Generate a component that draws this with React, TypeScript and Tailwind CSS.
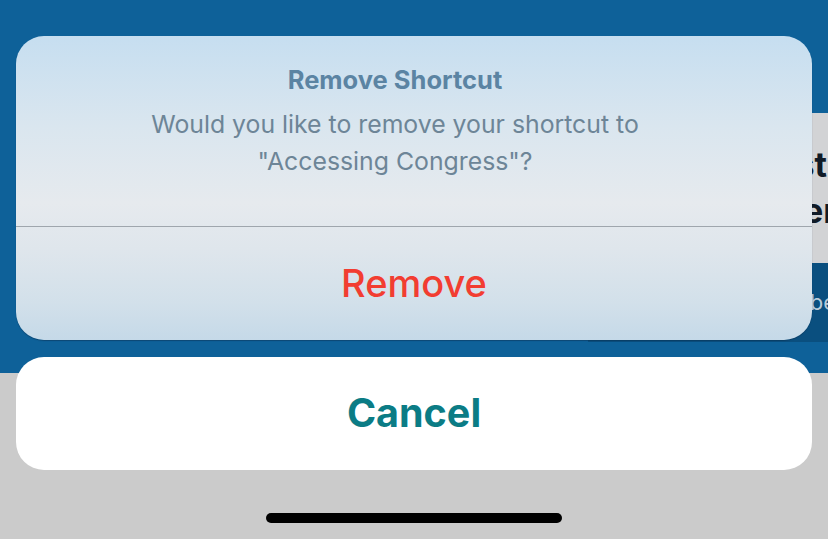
export default function App() {
  return (
    <div className="relative h-[539px] w-[828px] overflow-hidden font-['Inter',sans-serif]">
      {/* page underneath the sheet */}
      <div className="flex h-full flex-col">
        <div className="h-[373px] bg-[#0e6199] pt-[113px]">
          <div className="ml-auto w-[240px] overflow-hidden">
            <div className="flex h-[150px] flex-col justify-center gap-[8px] bg-[#d2d3d5] text-[34px] font-bold leading-[38px] text-[#101a26]">
              <div className="mr-[1px] whitespace-nowrap text-right">Latest</div>
              <div className="mr-[-9px] whitespace-nowrap text-right">Member</div>
            </div>
            <div className="flex h-[79px] items-center justify-end bg-[#0a4f7f] text-[22px] text-[#b9cbd9]">
              <span className="mr-[-8px] whitespace-nowrap">Subscribe</span>
            </div>
          </div>
        </div>
        <div className="flex-1 bg-[#cbcbcb]" />
      </div>

      {/* action sheet */}
      <div className="absolute inset-0 flex flex-col gap-[17px] px-4 pt-9">
        <div className="overflow-hidden rounded-[28px] bg-[linear-gradient(180deg,#c6def0_0%,#dae6ef_30%,#e6eaee_55%,#dfe6ec_70%,#d2e0ea_88%,#c5d9e8_100%)] shadow-[0_1px_1px_rgba(10,40,70,0.45)]">
          <div className="flex h-[190px] flex-col items-center pr-[38px] pt-[27px] text-center">
            <div className="text-[25.5px] font-bold leading-[34px] text-[#5b84a3]">Remove Shortcut</div>
            <div className="mt-[9px] text-[24.8px] leading-[37px] text-[#6d8597]">
              Would you like to remove your shortcut to
              <br />
              "Accessing Congress"?
            </div>
          </div>
          <div className="h-px bg-[#9fa6ad]" />
          <div className="flex h-[113px] items-center justify-center text-[38px] font-medium text-[#f23d31]">Remove</div>
        </div>
        <div className="flex h-[113px] items-center justify-center rounded-[28px] bg-white text-[39.5px] font-bold text-[#0b7c85]">Cancel</div>
      </div>

      {/* home indicator */}
      <div className="absolute left-[266px] top-[513px] h-[10px] w-[296px] rounded-full bg-black" />
    </div>
  );
}
